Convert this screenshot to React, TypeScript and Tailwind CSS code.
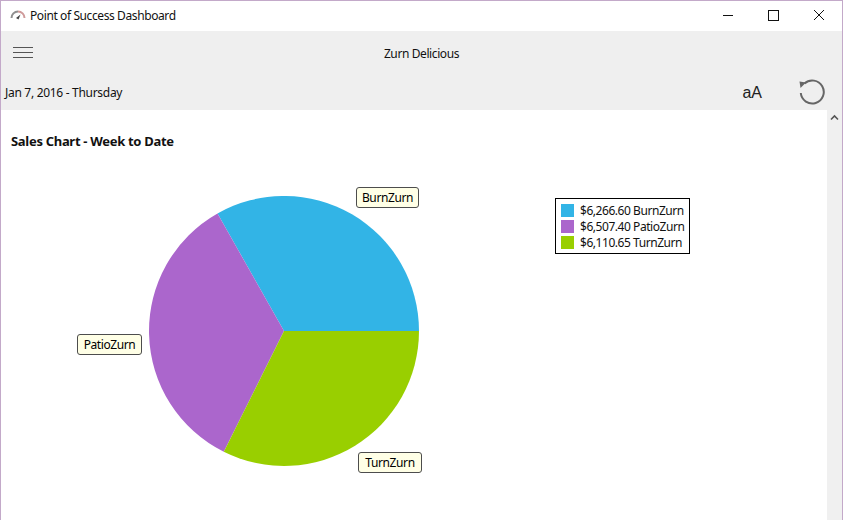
import React from "react";

interface Slice {
    name: string;
    amount: string;
    color: string;
    path: string;
}

// pie centre 284,331 in page coords, radius 135
const slices: Slice[] = [
    { name: "BurnZurn", amount: "$6,266.60", color: "#32b4e6", path: "M135 135 L68.5 17.5 A135 135 0 0 1 270 135 Z" },
    { name: "PatioZurn", amount: "$6,507.40", color: "#ab66cc", path: "M135 135 L74.8 255.8 A135 135 0 0 1 68.5 17.5 Z" },
    { name: "TurnZurn", amount: "$6,110.65", color: "#99cf00", path: "M135 135 L270 135 A135 135 0 0 1 74.8 255.8 Z" },
];

const PieLabel = ({ text, className }: { text: string; className: string }) => (
    <div
        className={`absolute h-[21px] flex items-center justify-center border border-[#4d4d4d] rounded-[3px] bg-[#ffffe6] text-[12px] tracking-[-0.4px] text-black ${className}`}
    >
        {text}
    </div>
);

const App: React.FC = () => {
    return (
        <div className="w-[843px] h-[520px] flex flex-col overflow-hidden bg-white border-x border-t border-[#c3a9c9] font-['Noto_Sans',sans-serif] text-[#111111]">
            <div className="h-[30px] flex items-center shrink-0">
                <svg width="16" height="12" viewBox="0 0 16 12" className="ml-[9px]">
                    <path d="M1.5 8 A6.5 6.5 0 0 1 8 1.5" fill="none" stroke="#8f8f8f" strokeWidth="2" />
                    <path d="M8 1.5 A6.5 6.5 0 0 1 14.5 8" fill="none" stroke="#cf9a9a" strokeWidth="2" />
                    <path d="M6 8 L10.5 4.5 L8.5 9.5 Z" fill="#444444" />
                </svg>
                <span className="ml-[4px] text-[12px] tracking-[-0.4px]">Point of Success Dashboard</span>
                <div className="ml-auto flex items-center h-full">
                    <svg width="46" height="30" viewBox="0 0 46 30">
                        <path d="M19 14.5 H29" stroke="#111111" strokeWidth="1" />
                    </svg>
                    <svg width="46" height="30" viewBox="0 0 46 30">
                        <rect x="18.5" y="9.5" width="10" height="10" fill="none" stroke="#111111" strokeWidth="1" />
                    </svg>
                    <svg width="46" height="30" viewBox="0 0 46 30">
                        <path d="M18 9 L28 19 M28 9 L18 19" stroke="#111111" strokeWidth="1" />
                    </svg>
                </div>
            </div>

            <div className="h-[79px] shrink-0 bg-[#efefef] flex flex-col">
                <div className="h-[45px] relative flex items-center justify-center">
                    <div className="absolute left-[12px] top-[16px] w-[20px] flex flex-col gap-[4px]">
                        <div className="h-px bg-[#555555]" />
                        <div className="h-px bg-[#555555]" />
                        <div className="h-px bg-[#555555]" />
                    </div>
                    <span className="text-[12px] tracking-[-0.4px] mt-[1px]">Zurn Delicious</span>
                </div>
                <div className="flex-1 flex items-center pl-[4px]">
                    <span className="text-[12px] tracking-[-0.3px] mb-[1px]">Jan 7, 2016 - Thursday</span>
                    <span className="ml-auto text-[16px] text-[#222222] font-['Liberation_Sans',sans-serif]">aA</span>
                    <svg width="28" height="28" viewBox="0 0 28 28" className="ml-[36px] mr-[16px] mb-[2px]">
                        <path d="M6.5 5.5 A11.5 11.5 0 1 1 2.8 15" fill="none" stroke="#666666" strokeWidth="2" />
                        <path d="M1.5 3.5 L8 4.5 L2.5 10 Z" fill="#666666" />
                    </svg>
                </div>
            </div>

            <div className="flex-1 flex min-h-0">
                <div className="flex-1 relative">
                    <h1 className="absolute left-[10px] top-[22px] text-[13px] font-bold tracking-[-0.3px] leading-[18px]">
                        Sales Chart - Week to Date
                    </h1>
                    <svg width="270" height="270" viewBox="0 0 270 270" className="absolute left-[148px] top-[86px]">
                        {slices.map((s) => (
                            <path key={s.name} d={s.path} fill={s.color} />
                        ))}
                    </svg>
                    <PieLabel text="BurnZurn" className="left-[355px] top-[77px] w-[63px]" />
                    <PieLabel text="PatioZurn" className="left-[76px] top-[224px] w-[65px]" />
                    <PieLabel text="TurnZurn" className="left-[357px] top-[342px] w-[64px]" />
                    <div className="absolute left-[554px] top-[88px] w-[135px] h-[56px] border border-black bg-white pl-[5px] pt-[5px] flex flex-col gap-[3px]">
                        {slices.map((s) => (
                            <div key={s.name} className="h-[13px] flex items-center text-[12px] tracking-[-0.45px] whitespace-nowrap">
                                <span className="w-[13px] h-[13px] mr-[6px] shrink-0" style={{ backgroundColor: s.color }} />
                                {s.amount} {s.name}
                            </div>
                        ))}
                    </div>
                </div>
                <div className="w-[15px] shrink-0 bg-[#f0f0f0] flex justify-center pt-[4px]">
                    <svg width="9" height="7" viewBox="0 0 9 7">
                        <path d="M1 5.5 L4.5 2 L8 5.5" fill="none" stroke="#555555" strokeWidth="1.6" />
                    </svg>
                </div>
            </div>
        </div>
    );
};

export default App;
